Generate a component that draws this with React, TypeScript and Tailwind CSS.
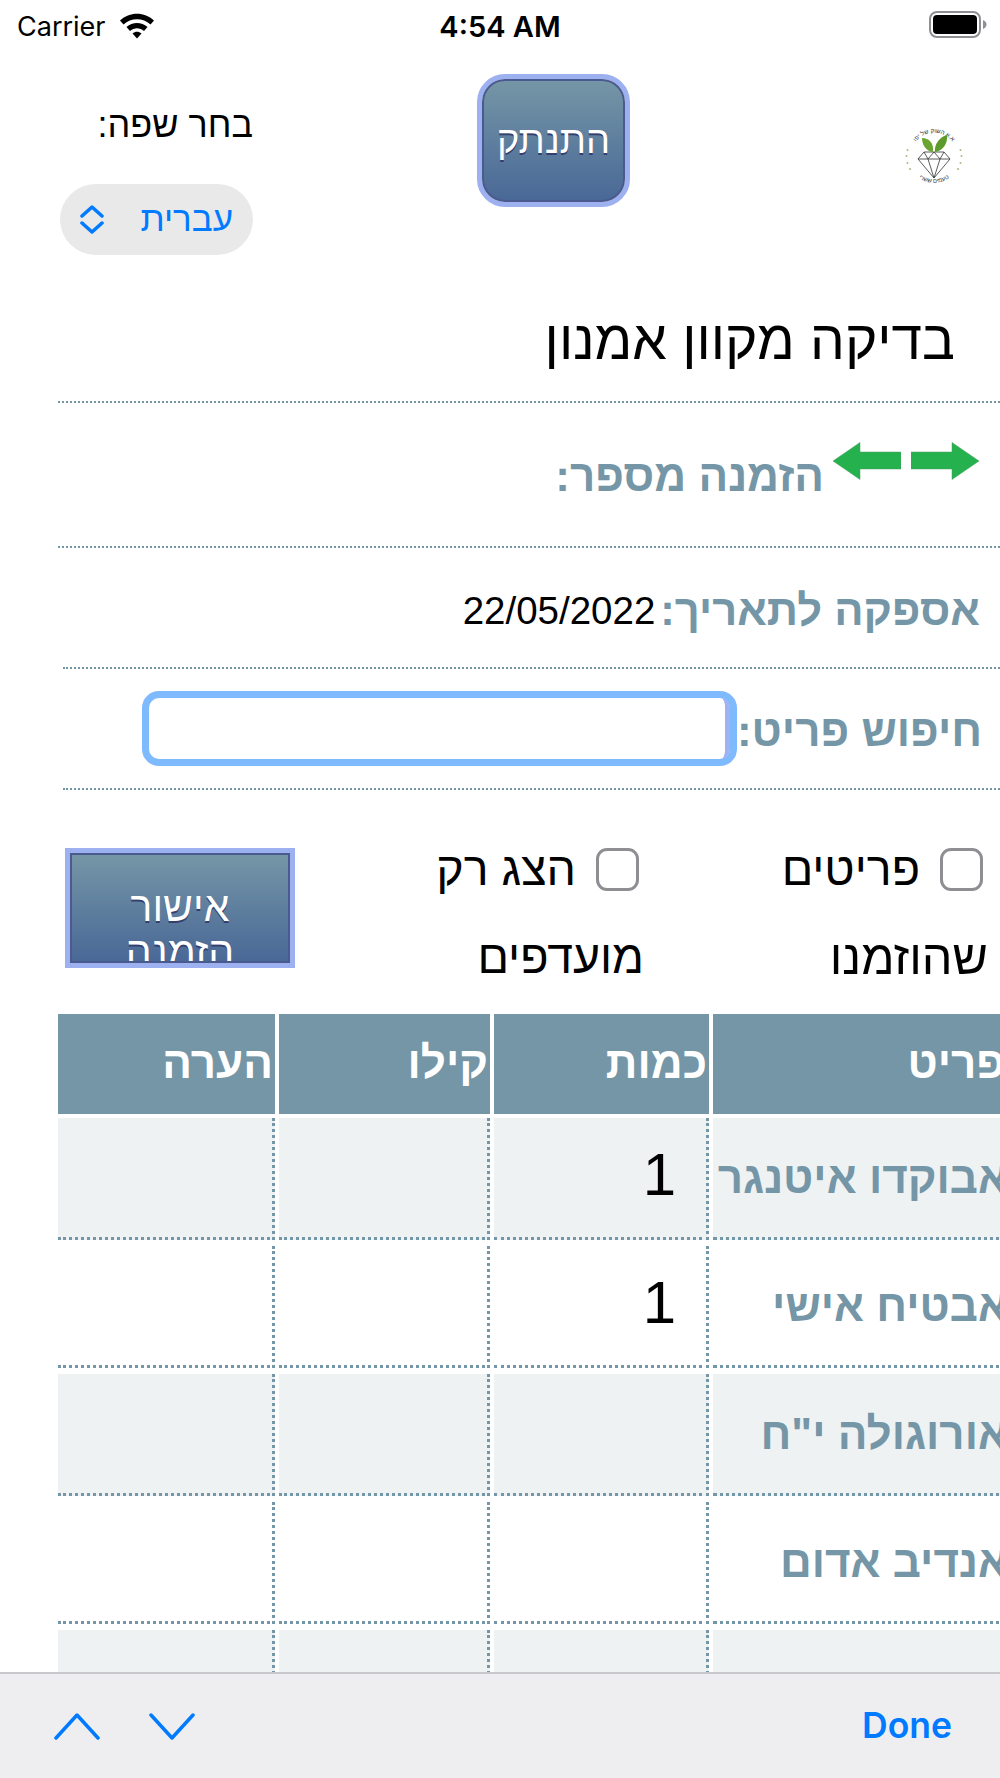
const rows = [
  { name: 'אבוקדו איטנגר', qty: '1' },
  { name: 'אבטיח אישי', qty: '1' },
  { name: 'אורוגולה י"ח', qty: '' },
  { name: 'אנדיב אדום', qty: '' },
  { name: '', qty: '' },
];

const gridCols = 'grid grid-cols-[217px_211px_215px_300px] gap-x-[4px]';

function WifiIcon() {
  return (
    <svg width="36" height="28" viewBox="0 0 36 28" fill="none" className="ml-[13px] mt-[-6px]">
      <path d="M1 9.500C10.500 0.500 25.500 0.500 35 9.500L31.500 13.500C24 6.500 12 6.500 4.500 13.500Z" fill="#000" />
      <path d="M7.500 16C13.500 10.500 22.500 10.500 28.500 16L25 20C20.500 16.200 15.500 16.200 11 20Z" fill="#000" />
      <path d="M13.500 22.500C16.500 20 19.500 20 22.500 22.500L18 27.500Z" fill="#000" />
    </svg>
  );
}

function BatteryIcon() {
  return (
    <svg width="58" height="27" viewBox="0 0 58 27" fill="none">
      <rect x="1" y="1" width="50" height="25" rx="7" stroke="#8e8e93" strokeWidth="2" />
      <rect x="4" y="4" width="44" height="19" rx="4" fill="#000" />
      <path d="M54 9C56.500 10 57.500 12 57.500 13.500C57.500 15 56.500 17 54 18Z" fill="#8e8e93" />
    </svg>
  );
}

function Logo() {
  return (
    <svg width="58" height="58" viewBox="0 0 58 58" className="shrink-0">
      <defs>
        <path id="logo-top" d="M7 22A23 23 0 0 1 51 22" />
        <path id="logo-bottom" d="M10 48A27 27 0 0 0 48 48" />
      </defs>
      <text fontSize="6" fill="#333" fontFamily="'Liberation Sans', sans-serif" direction="rtl">
        <textPath href="#logo-top" startOffset="50%" textAnchor="middle">א.א השוק של יפו</textPath>
      </text>
      <text fontSize="6" fill="#333" fontFamily="'Liberation Sans', sans-serif" direction="rtl">
        <textPath href="#logo-bottom" startOffset="50%" textAnchor="middle">טעמים ששרי</textPath>
      </text>
      <g fill="#a9b98a">
        <circle cx="1.500" cy="29" r="1" />
        <circle cx="2.500" cy="23" r="1" />
        <circle cx="2.500" cy="36" r="1" />
        <circle cx="5" cy="42" r="1" />
        <circle cx="56.500" cy="29" r="1" />
        <circle cx="55.500" cy="23" r="1" />
        <circle cx="55.500" cy="36" r="1" />
        <circle cx="53" cy="42" r="1" />
      </g>
      <path d="M19 25L39 25L45 32L29 51L13 32Z M13 32L45 32 M19 25L23 32L29 51L35 32L39 25 M29 25L23 32 M29 25L35 32" fill="none" stroke="#333" strokeWidth="0.800" />
      <path d="M28 25C21 24 17 18 17 11C24 11 29 16 28 25Z" fill="#6aa52f" />
      <path d="M30 25C29 18 34 10 42 8C43 16 38 24 30 25Z" fill="#5b9a2b" />
    </svg>
  );
}

function SmallChevrons() {
  return (
    <svg width="26" height="29" viewBox="0 0 26 29" fill="none" stroke="#007aff" strokeWidth="3.500" strokeLinecap="round" strokeLinejoin="round">
      <path d="M3 11L13 2L23 11" />
      <path d="M3 18L13 27L23 18" />
    </svg>
  );
}

function DottedRule({ from }: { from: string }) {
  return <div className={`${from} border-b-2 border-dotted border-[#7596a6]`} />;
}

function App() {
  return (
    <div className="relative w-[1000px] h-[1778px] overflow-hidden bg-white font-['Liberation_Sans',sans-serif] text-black">
      {/* status bar */}
      <div className="flex h-[56px] items-center pl-[17px] pr-[13px] relative">
        <span className="font-['Inter',sans-serif] text-[27px] leading-none mt-[-4px]">Carrier</span>
        <WifiIcon />
        <span className="absolute left-[430px] top-[12px] font-['Inter',sans-serif] text-[29px] font-semibold leading-none w-[140px] text-center">4:54 AM</span>
        <div className="ml-auto mt-[-8px]">
          <BatteryIcon />
        </div>
      </div>

      {/* language + logout + logo */}
      <div className="flex items-start h-[199px] pt-[18px]">
        <div className="ml-[60px] w-[193px] shrink-0">
          <p dir="rtl" className="mt-[31px] text-[36px] leading-[40px] text-right">בחר שפה:</p>
          <div className="mt-[39px] flex h-[71px] items-center justify-between rounded-[36px] bg-[#e9e9e9] pl-[19px] pr-[20px]">
            <SmallChevrons />
            <span dir="rtl" className="text-[35px] text-[#007aff]">עברית</span>
          </div>
        </div>
        <button className="ml-[224px] flex h-[133px] w-[153px] shrink-0 items-center justify-center rounded-[28px] border-[5px] border-[#9db0f0] bg-transparent">
          <span className="flex h-full w-full items-center justify-center rounded-[23px] border-2 border-[#4a5a8e] bg-gradient-to-b from-[#7596a6] to-[#4a6896] text-[38px] text-white [text-shadow:0_2px_0_#33406e]">
            התנתק
          </span>
        </button>
        <div className="ml-[275px] mt-[53px]">
          <Logo />
        </div>
      </div>

      {/* title */}
      <div className="h-[146px] pl-[58px]">
        <h1 dir="rtl" className="pt-[55px] pr-[45px] text-[55px] leading-[60px] font-normal text-right whitespace-nowrap">בדיקה מקוון אמנון</h1>
      </div>
      <DottedRule from="ml-[58px]" />

      {/* order number */}
      <div className="relative h-[143px] pl-[556px]">
        <p dir="rtl" className="w-[268px] pt-[48px] text-[44px] leading-[50px] font-bold text-[#7596a6] whitespace-nowrap">הזמנה מספר:</p>
        <div className="absolute left-[833px] top-[39px] flex gap-[10px]">
          <svg width="68" height="38" viewBox="0 0 68 38"><path d="M0 19L27 0.500V10H68V27H27V37.500Z" fill="#25b14e" stroke="#4b9e60" strokeWidth="0.500" /></svg>
          <svg width="68" height="38" viewBox="0 0 68 38"><path d="M68 19L41 0.500V10H0V27H41V37.500Z" fill="#25b14e" stroke="#4b9e60" strokeWidth="0.500" /></svg>
        </div>
      </div>
      <DottedRule from="ml-[58px]" />

      {/* delivery date */}
      <div dir="rtl" className="flex h-[119px] items-center gap-[5px] pr-[20px] pt-[6px]">
        <span className="text-[43.500px] font-bold text-[#7596a6] whitespace-nowrap">אספקה לתאריך:</span>
        <span className="text-[38.500px]">22/05/2022</span>
      </div>
      <DottedRule from="ml-[63px]" />

      {/* item search */}
      <div dir="rtl" className="flex h-[119px] items-center pr-[18px]">
        <span className="pt-[4px] text-[44px] font-bold text-[#7596a6] whitespace-nowrap">חיפוש פריט:</span>
        <div className="h-[75px] w-[595px] rounded-[17px] border-[7px] border-[#7fbaff]">
          <input className="h-full w-full rounded-[9px] border-r-[5px] border-[#9fb3f2] outline-none" dir="ltr" />
        </div>
      </div>
      <DottedRule from="ml-[63px]" />

      {/* filters + approve */}
      <div className="flex h-[224px] items-start pl-[65px] pt-[58px]">
        <button className="h-[120px] w-[230px] shrink-0 border-[5px] border-[#9db0f0]">
          <span dir="rtl" className="block h-full overflow-hidden border-2 border-[#4a5a8e] bg-gradient-to-b from-[#7596a6] to-[#4a6896] pt-[30px] text-center text-[41px] leading-[45px] text-white [text-shadow:0_2px_0_#33406e]">
            אישור<br />הזמנה
          </span>
        </button>
        <div dir="rtl" className="ml-[139px] w-[208px] shrink-0 pr-[3px]">
          <label className="flex h-[43px] items-center gap-[20px]">
            <span className="h-[43px] w-[43px] shrink-0 rounded-[11px] border-[3px] border-[#8e8e93]" />
            <span className="text-[46.500px] leading-none">הצג רק</span>
          </label>
          <p className="mt-[37px] mr-[-5px] text-[46.500px] leading-[58px]">מועדפים</p>
        </div>
        <div dir="rtl" className="ml-[124px] w-[220px] shrink-0 pr-[3px]">
          <label className="flex h-[43px] items-center gap-[20px]">
            <span className="h-[43px] w-[43px] shrink-0 rounded-[11px] border-[3px] border-[#8e8e93]" />
            <span className="text-[46.500px] leading-none">פריטים</span>
          </label>
          <p className="mt-[37px] mr-[-5px] text-[48.500px] leading-[58px]">שהוזמנו</p>
        </div>
      </div>

      {/* table */}
      <div className="ml-[58px]">
        <div className={`${gridCols} h-[100px] w-[960px]`}>
          {['הערה', 'קילו', 'כמות', 'פריט'].map((title) => (
            <div key={title} dir="rtl" className={`flex items-center bg-[#7596a6] pb-[3px] text-[44px] font-bold text-white ${title === 'פריט' ? 'pr-[8px]' : 'pr-[2px]'}`}>
              {title}
            </div>
          ))}
        </div>
        <div className="mt-[4px] flex flex-col gap-[6px]">
          {rows.map((row, i) => (
            <div key={i} className={`${gridCols} h-[122px] w-[960px]`}>
              <div className={`border-r-[3px] border-b-[3px] border-dotted border-[#7596a6] ${i % 2 === 0 ? 'bg-[#eef2f3]' : 'bg-white'}`} />
              <div className={`border-r-[3px] border-b-[3px] border-dotted border-[#7596a6] ${i % 2 === 0 ? 'bg-[#eef2f3]' : 'bg-white'}`} />
              <div className={`flex items-center justify-end border-r-[3px] border-b-[3px] border-dotted border-[#7596a6] pb-[6px] pr-[30px] text-[60px] ${i % 2 === 0 ? 'bg-[#eef2f3]' : 'bg-white'}`}>
                {row.qty}
              </div>
              <div dir="rtl" className={`flex items-center border-b-[3px] border-dotted border-[#7596a6] pr-[5px] text-[44px] font-bold whitespace-nowrap text-[#7596a6] ${i % 2 === 0 ? 'bg-[#eef2f3]' : 'bg-white'}`}>
                {row.name}
              </div>
            </div>
          ))}
        </div>
      </div>

      {/* keyboard accessory bar */}
      <div className="absolute bottom-0 left-0 flex h-[106px] w-full items-center border-t-2 border-[#c8c8cc] bg-[#eeeef0] pl-[54px] pr-[48px]">
        <svg width="46" height="27" viewBox="0 0 46 27" fill="none" stroke="#007aff" strokeWidth="3.500" strokeLinecap="round" strokeLinejoin="round">
          <path d="M2 25L23 2L44 25" />
        </svg>
        <svg width="46" height="27" viewBox="0 0 46 27" fill="none" stroke="#007aff" strokeWidth="3.500" strokeLinecap="round" strokeLinejoin="round" className="ml-[49px]">
          <path d="M2 2L23 25L44 2" />
        </svg>
        <span className="ml-auto font-['Inter',sans-serif] text-[35.500px] font-semibold text-[#007aff]">Done</span>
      </div>
    </div>
  );
}

export default App;
